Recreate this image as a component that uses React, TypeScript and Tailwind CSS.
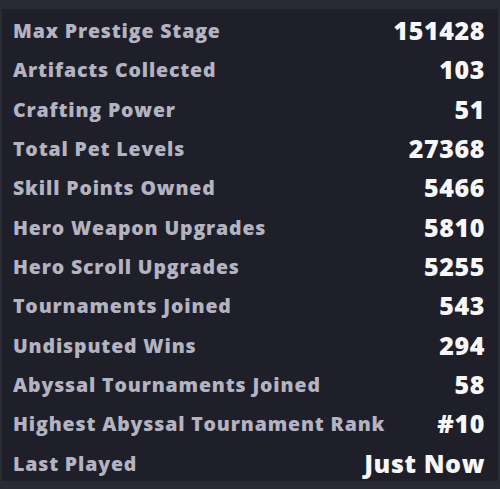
import React from "react";

const rows: [string, string][] = [
  ["Max Prestige Stage", "151428"],
  ["Artifacts Collected", "103"],
  ["Crafting Power", "51"],
  ["Total Pet Levels", "27368"],
  ["Skill Points Owned", "5466"],
  ["Hero Weapon Upgrades", "5810"],
  ["Hero Scroll Upgrades", "5255"],
  ["Tournaments Joined", "543"],
  ["Undisputed Wins", "294"],
  ["Abyssal Tournaments Joined", "58"],
  ["Highest Abyssal Tournament Rank", "#10"],
  ["Last Played", "Just Now"],
];

export default function App() {
  return (
    <div
      className="w-[500px] h-[489px] bg-[#2a2a35] pt-[9px] px-[2px] pb-[8px]"
      style={{ fontFamily: '"Open Sans", "Noto Sans", sans-serif' }}
    >
      <div className="h-full bg-[#1f1f29] flex flex-col pl-[11px] pr-[13px] pt-[2px]">
        {rows.map(([label, value]) => (
          <div key={label} className="h-[39.33px] shrink-0 flex items-center justify-between">
            <span className="text-[19.5px] font-extrabold text-[#b3b3c1] tracking-[0.85px]">{label}</span>
            <span className="text-[25px] font-extrabold text-[#f7f7f7] leading-none tracking-[0.6px]">{value}</span>
          </div>
        ))}
      </div>
    </div>
  );
}
